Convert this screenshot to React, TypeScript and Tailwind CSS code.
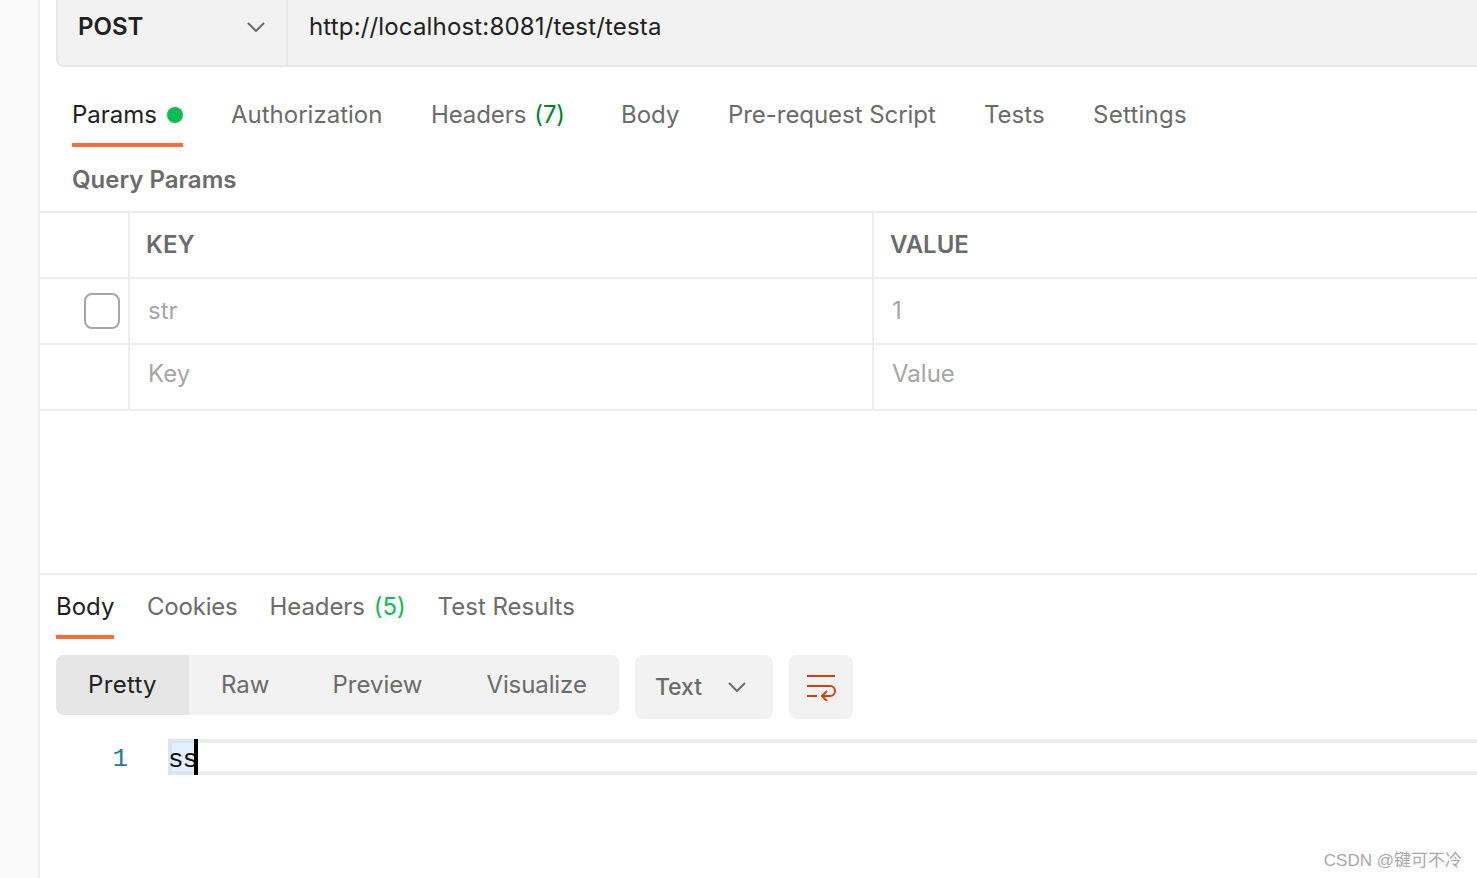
const INTER = "font-['Inter','Noto_Sans',sans-serif]";
const MONO = "font-['Liberation_Mono',monospace]";

function Chevron({ className }: { className?: string }) {
  return (
    <svg width="18" height="10" viewBox="0 0 18 10" fill="none" className={className}>
      <path d="M1 1l8 8 8-8" stroke="#6b6b6b" strokeWidth="2" />
    </svg>
  );
}

function TopTab({ label, count, active, dot, w, ml, track }: { label: string; count?: string; active?: boolean; dot?: boolean; w: string; ml?: string; track?: string }) {
  return (
    <div className={`${w} ${ml ?? ""} ${track ?? ""} h-[49px] flex items-center whitespace-nowrap text-[24px] pb-[11px] border-b-4 ${active ? "border-[#ff6c37] text-[#212121]" : "border-transparent text-[#6b6b6b]"}`}>
      {label}
      {count && <span className="ml-[8px] text-[#007f31]">{count}</span>}
      {dot && <span className="ml-[10px] w-4 h-4 rounded-full bg-[#0cbb52]" />}
    </div>
  );
}

function TableRow({ left, a, b, head, placeholder }: { left?: boolean; a: string; b: string; head?: boolean; placeholder?: boolean }) {
  const text = head ? "font-semibold text-[#6b6b6b] pl-[16px]" : placeholder ? "text-[#a6a6a6] pl-[18px] pb-[6px]" : "text-[#a6a6a6] pl-[18px]";
  return (
    <div className="flex h-[66px] border-b-2 border-[#ededed] text-[24px]">
      <div className="w-[90px] shrink-0 border-r-2 border-[#ededed] flex items-center justify-end pr-[8px]">
        {left && <span className="w-9 h-9 rounded-[8px] border-2 border-[#a6a6a6]" />}
      </div>
      <div className={`w-[744px] shrink-0 border-r-2 border-[#ededed] flex items-center ${text}`}>{a}</div>
      <div className={`flex-1 flex items-center ${text}`}>{b}</div>
    </div>
  );
}

export default function App() {
  return (
    <div className={`relative flex h-[878px] w-[1477px] overflow-hidden bg-white ${INTER}`}>
      <div className="w-[40px] shrink-0 bg-[#f9f9f9] border-r-2 border-[#ededed]" />
      <div className="flex-1 min-w-0 flex flex-col">
        <div className="pl-[16px]">
          <div className="flex h-[67px] bg-[#f2f2f2] border-l-2 border-b-2 border-[#e6e6e6] rounded-bl-[8px]">
            <div className="w-[230px] shrink-0 border-r-2 border-[#e6e6e6] flex items-center justify-between pl-[20px] pr-[21px] pb-[12px] text-[24px] font-semibold text-[#212121]">
              POST
              <Chevron />
            </div>
            <div className="pl-[21px] pt-[9px] text-[24px] tracking-[0.16px] text-[#212121]">http://localhost:8081/test/testa</div>
          </div>
        </div>

        <div className="flex pl-[32px] pt-[31px]">
          <TopTab label="Params" dot active w="w-[111px]" />
          <TopTab label="Authorization" w="w-[151px]" ml="ml-[48px]" />
          <TopTab label="Headers" count="(7)" w="w-[133px]" ml="ml-[49px]" track="tracking-[-0.1px]" />
          <TopTab label="Body" w="w-[58px]" ml="ml-[57px]" />
          <TopTab label="Pre-request Script" w="w-[208px]" ml="ml-[49px]" track="tracking-[-0.05px]" />
          <TopTab label="Tests" w="w-[60px]" ml="ml-[48px]" />
          <TopTab label="Settings" w="w-[94px]" ml="ml-[49px]" track="tracking-[0.25px]" />
        </div>

        <div className="h-[66px] pl-[32px] pt-[1px] flex items-center text-[24px] font-semibold text-[#6b6b6b] border-b-2 border-[#ededed]">Query Params</div>

        <TableRow a="KEY" b="VALUE" head />
        <TableRow left a="str" b="1" />
        <TableRow a="Key" b="Value" placeholder />

        <div className="h-[164px] border-b-2 border-[#ededed]" />

        <div className="flex pl-[16px]">
          <div className="w-[58px] h-[64px] flex items-center pt-[4px] border-b-4 border-[#ff6c37] text-[24px] text-[#212121]">Body</div>
          <div className="ml-[33px] h-[64px] flex items-center pb-[1px] text-[24px] tracking-[-0.2px] text-[#6b6b6b]">Cookies</div>
          <div className="ml-[32px] h-[64px] flex items-center pb-[1px] text-[24px] tracking-[-0.1px] text-[#6b6b6b] whitespace-nowrap">
            Headers<span className="ml-[9px] text-[#0cbb52]">(5)</span>
          </div>
          <div className="ml-[32px] h-[64px] flex items-center pb-[1px] text-[24px] text-[#6b6b6b]">Test Results</div>
        </div>

        <div className="flex items-start pl-[16px] pt-[16px] gap-[16px]">
          <div className="flex h-[60px] w-[563px] bg-[#f2f2f2] rounded-[8px] overflow-hidden text-[24px] text-[#6b6b6b]">
            <div className="w-[133px] bg-[#e6e6e6] text-[#212121] tracking-[0.3px] flex items-center justify-center pb-[1px]">Pretty</div>
            <div className="ml-[32px] flex items-center pb-[1px]">Raw</div>
            <div className="ml-[63px] flex items-center pb-[1px]">Preview</div>
            <div className="ml-[64px] flex items-center pb-[1px] tracking-[-0.1px]">Visualize</div>
          </div>
          <div className="w-[138px] h-[64px] bg-[#f2f2f2] rounded-[8px] flex items-center justify-between pl-[20px] pr-[27px] text-[23px] font-medium tracking-[-0.1px] text-[#6b6b6b]">
            Text
            <Chevron />
          </div>
          <div className="w-[64px] h-[64px] bg-[#f2f2f2] rounded-[8px] flex items-center justify-center">
            <svg width="30" height="28" viewBox="0 0 30 28" fill="none" stroke="#d23f0e" strokeWidth="2">
              <path d="M1 3h28M1 13h23a5 5 0 0 1 0 10h-8M1 23h10" />
              <path d="M21 18l-5 5 5 5" />
            </svg>
          </div>
        </div>

        <div className="flex h-[36px] mt-[20px]">
          <div className={`w-[88px] shrink-0 flex items-center justify-end pt-[5px] ${MONO} text-[26px] text-[#1d7ba3]`}>1</div>
          <div className="w-[40px] shrink-0" />
          <div className="flex flex-1 border-y-4 border-[#ededed]">
            <div className={`flex items-center -my-1 h-[36px] w-[26px] bg-[#e3effb] border-y-4 border-l-4 border-[#d9e6f2] ${MONO} text-[26px] tracking-[-1px] text-[#111111] whitespace-nowrap`}>
              <span className="-ml-[4px] pt-[6px]">ss</span>
            </div>
            <div className="-my-1 h-[36px] w-1 bg-black" />
          </div>
        </div>
      </div>

      <div className="absolute right-[15px] bottom-[5px] text-[17px] text-[#a8a8a8] font-['Liberation_Sans','Noto_Sans_CJK_SC',sans-serif]">CSDN @键可不冷</div>
    </div>
  );
}
